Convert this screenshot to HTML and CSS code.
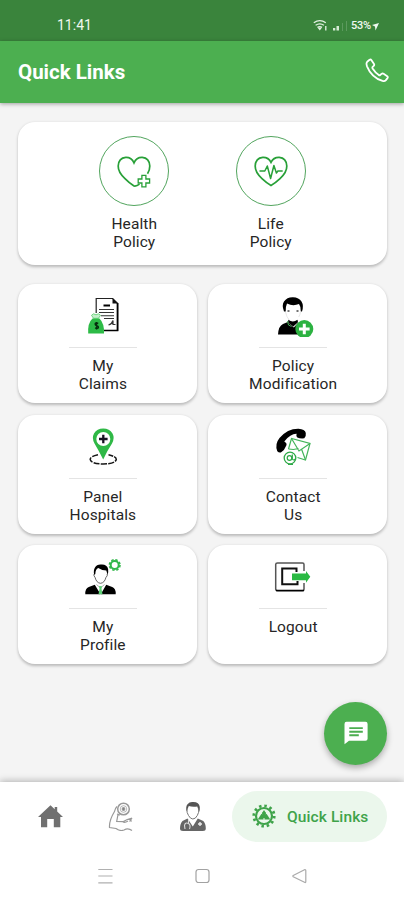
FILE: index.html
```html
<!DOCTYPE html>
<html lang="en">
<head>
<meta charset="utf-8">
<title>Quick Links</title>
<link rel="stylesheet" href="styles.css">
</head>
<body>
<div class="phone">
  <div class="status">
    <span class="time">11:41</span>
    <div class="status-right">
      <svg width="34" height="14" viewBox="311 20 34 14">
        <g fill="none" stroke="#e4f2e4" stroke-width="1.3"><path d="M311.8 23.8q6-4.300 12 0M313.600 26.300q4.200-2.900 8.300 0M315.500 28.400q2.200-1.500 4.500 0" /><path d="M323.800 27v4.500" /></g>
        <path d="M315.500 28.500h4.500l-2.200 3z" fill="#e4f2e4"/>
        <path d="M331 29h2.300v2.500H331zM334.500 27h2.500v4.500h-2.500z" fill="#d4ead4"/>
        <path d="M340 24h1v8h-1zM344 22h1v10h-1z" fill="#5c9a5e"/>
      </svg>
      <span class="battery">53%</span>
      <svg width="7" height="9" viewBox="0 0 7 9"><path d="M0 3 7 1 3.500 8.500 3 4.500z" fill="#eff8ef"/></svg>
    </div>
  </div>
  <header class="appbar">
    <h1>Quick Links</h1>
    <svg width="26" height="26" viewBox="0 0 26 26" fill="none" stroke="#fff" stroke-width="1.800" stroke-linejoin="round"><path d="M3.200 3.700 5.600 1.700Q6.700 1.100 7.500 2.200L10 5.900Q10.600 7 9.700 7.900L8.400 9.200Q8.200 9.800 8.600 10.500 11.200 14.600 14.800 17.100 15.600 17.500 16.200 17L17.500 15.900Q18.500 15.100 19.600 15.800L23.200 18.200Q24.200 19 23.500 20.100L21.700 22.400Q20.700 23.400 18.500 22.900 7.500 19.400 3 8.300 1.900 5.300 3.200 3.700Z"/></svg>
  </header>

  <main>
    <section class="card policies">
      <div class="policy">
        <div class="ring"><svg width="70" height="70" viewBox="0 0 70 70" fill="none" stroke="#28a038" stroke-width="1.700"><path d="M40.500 48.200Q37.500 50.500 35 50 30.500 47.300 26 42.700 19 36 19.200 30 19.600 22 26.800 21.400 32.500 21.200 35 26.800 37.500 21.200 43.200 21.400 50.400 22 50.800 30 50.800 34.500 48.500 37.800"/><path stroke-width="1.300" d="M42.900 39.300h4v3.700h3.700v4h-3.700v3.900h-4V47h-3.700v-4h3.700z"/></svg></div>
        <p>Health<br>Policy</p>
      </div>
      <div class="policy">
        <div class="ring"><svg width="70" height="70" viewBox="0 0 70 70" fill="none" stroke="#28a038" stroke-width="1.700"><path d="M35 49.500Q30.500 47 26 42.700 19 36 19.200 30 19.600 22 26.800 21.400 32.500 21.200 35 26.400 37.500 21.200 43.200 21.400 50.400 22 50.800 30 51 36 44 42.700 39.500 47 35 49.500Z"/><path stroke-width="1.500" stroke-linejoin="round" d="M23.500 35h5.300l2.500-5 3.300 12.500 3.300-13 2.500 7.500 1.500-2h4.800"/></svg></div>
        <p>Life<br>Policy</p>
      </div>
    </section>

    <section class="grid">
      <div class="card tile">
        <svg width="44" height="44" viewBox="81 293 44 44">
          <path d="M96.200 313V298.500h16.500l5 5V330.500H104" fill="none" stroke="#222" stroke-width="1.200"/><path d="M117.500 303v28.200M104 330.500h14" stroke="#000" stroke-width="1.700"/><path d="M112.500 298v5.500h5.500z" fill="#111"/>
          <path d="M103.500 305.500h6.500" stroke="#000" stroke-width="2"/><path d="M99 309.500h15M99 312.500h15M101 315.800h13M104 318.500h10" stroke="#333" stroke-width="1.100"/><path d="M108.500 325q3.500-1 4.500-4.500v4h2.500" fill="none" stroke="#333" stroke-width="1.200"/>
          <path d="m91.500 315.300 2-1.500 2.500 1 2.500-1 2 1.500-2 3h-5z" fill="#c5f0cc" stroke="#55ca68" stroke-width=".8"/><path d="M92.500 318.500h7q5 5 4.500 15H88.200Q87.500 323 92.500 318.500Z" fill="#2dbb47"/><path d="M98.300 323.400q-3-1.200-3.200.7 0 1.200 1.700 1.600 1.900.5 1.600 1.900-.7 1.500-3.300.2M96.600 322v7.500" fill="none" stroke="#062d0d" stroke-width="1.400"/>
        </svg>
        <hr><p>My<br>Claims</p>
      </div>
      <div class="card tile">
        <svg width="44" height="44" viewBox="271 293 44 44">
          <path d="M284 311.500q-2.500-6.500 0-10Q287 297 293 297.200q6 .2 8.500 4.300 2.500 4 .5 10h-1.200q.2-5-1.800-7.500-6 2.500-12-.5-1.500 3-1.300 8z"/>
          <path d="M287.500 311h2M296.500 311h2" stroke="#444" stroke-width="1.300"/><path d="M285.500 312q1 5 4 8.500M300.500 312q-.5 3-1.800 5" fill="none" stroke="#ddd" stroke-width=".7"/>
          <path d="M288.300 319.700q4.500 3.500 9.200 0l.5 2.500-4.700 4.300-5.200-4z"/><path d="M278 334.500q.5-8.500 5-10.500l4.800-2 6 5.500 4.200-4.500 2 11.500z"/><path d="m287.500 321 1 4 3 1.500" fill="none" stroke="#48b75a" stroke-width="1"/>
          <circle cx="304.300" cy="329" r="9" fill="#2cb241"/><path d="M304.300 323.700v10.600M299 329h10.600" stroke="#fff" stroke-width="3"/>
        </svg>
        <hr><p>Policy<br>Modification</p>
      </div>
      <div class="card tile">
        <svg width="44" height="44" viewBox="81 424 44 44">
          <path d="M98 454.800Q90 456.500 90.200 459.500 91.500 464 103.200 464 115 464 116.300 459.500 116.400 456.500 108.500 454.800" fill="none" stroke="#161616" stroke-width="1.500" stroke-dasharray="6 1.300"/>
          <path d="M103.200 459.500Q99 451 94.500 443.500 91.500 438 94 433.500 97 428.500 103.200 428.500 109.500 428.500 112.500 433.500 115 438 112 443.500 107 451 103.200 459.500Z" fill="#2fb846"/><circle cx="103.300" cy="439" r="7" fill="#fff"/><path d="M103.300 434.800v8.400M99 439h8.600" stroke="#151020" stroke-width="2.300"/>
        </svg>
        <hr><p>Panel<br>Hospitals</p>
      </div>
      <div class="card tile">
        <svg width="44" height="44" viewBox="271 424 44 44">
          <path d="M277.300 451.200q-2.800-7 2.200-13.200 8-9.500 19-9.300 6.500.3 7.300 4.300.5 3.500-1.500 5.300-4 .5-7-.8-1.500-1-.7-3.700-6-.2-12.300 7.600 3 1.700 2 4-1.500 4.500-5.500 7-2 .5-3.500-1.200z"/>
          <g fill="none" stroke="#43b45a" stroke-width="1.200"><path d="M288.500 449 291.500 438.500 310 443.500 305.500 460 297.500 457.500"/><path d="m291.500 438.500 7.500 12.500 11-7.500M288.500 449l5 .5 5-1M301.500 449l4 11"/></g>
          <circle cx="290" cy="458" r="5.800" fill="#fff" stroke="#2da947" stroke-width="1.300"/><circle cx="289.500" cy="458" r="2.300" fill="none" stroke="#2da947" stroke-width="1.200"/><path d="M292.300 454.500v4.500q1.500 2 3.200 0M288 464.500h5" fill="none" stroke="#2da947" stroke-width="1.200"/>
        </svg>
        <hr><p>Contact<br>Us</p>
      </div>
      <div class="card tile">
        <svg width="44" height="44" viewBox="81 554 44 44">
          <path d="M94.200 575q-1-5 .8-7.500 1.500-3 5.500-3 6.500-.7 7.600 4.500.5 3-.5 6l-1.300-4.500q-4 0-8-2.500-2.800 1-3 6z"/><path d="M94 574q-.5 2 1 3.300 1.500 5.700 5.500 6 4-.3 5.500-6 1.800-1.300 1.200-3.300" fill="none" stroke="#555" stroke-width=".9"/>
          <path d="M85.300 594.300q-.3-6 3.500-7.300l6-2.300 5.700 9.600zM115.700 594.300q.3-6-3.500-7.300l-6-2.300-5.400 9.600z"/><path d="m96.500 584.500 4 3.500 4-3.500" fill="none" stroke="#999" stroke-width=".8"/><path d="m99 586 3 .2-.5 2.500 1 5.500h-4l1-5.500z" fill="#5fd077"/>
          <circle cx="114.700" cy="565" r="4" fill="none" stroke="#31b74a" stroke-width="2"/><circle cx="114.700" cy="565" r="5.300" fill="none" stroke="#31b74a" stroke-width="1.600" stroke-dasharray="2.400 1.763"/>
        </svg>
        <hr><p>My<br>Profile</p>
      </div>
      <div class="card tile">
        <svg width="44" height="44" viewBox="271 554 44 44">
          <path d="M304 571v-6.500q0-1.500-1.500-1.500h-25q-1.800 0-1.800 1.500v24.500q0 1.700 1.800 1.700h25q1.500 0 1.500-1.500V583" fill="none" stroke="#555" stroke-width="1.500"/><path d="M276 590.500h28" stroke="#000" stroke-width="1.500"/>
          <path d="M296.500 572v-3.500h-14.300v15.700h15.300V581" fill="none" stroke="#111" stroke-width="2"/>
          <path d="M292 573.500h14v-2.500l4.300 5.700-4.300 6v-2.500h-14z" fill="#2aba43"/>
        </svg>
        <hr><p>Logout</p>
      </div>
    </section>
    <button class="fab" aria-label="Chat"><svg width="24" height="24" viewBox="0 0 24 24"><path d="M2.500.8h19Q23.600.8 23.600 2.900V17.700Q23.600 19.800 21.500 19.800H5L.5 23.300V2.900Q.5.800 2.500.8Z" fill="#fff"/><path d="M5.300 7.100h13.500M5.300 10.700h13.500M5.300 14.200h9.500" stroke="#4cae50" stroke-width="1.900"/></svg></button>
  </main>

  <nav class="tabs">
    <svg width="26" height="30" viewBox="37 801 26 30"><path d="m38 817 12.500-11.700 4.200 4V807h2.500v4.500L63 817h-2.700v10.300h-6.500V819h-6.600v8.300h-6.200V817z" fill="#707070"/></svg>
    <svg width="26" height="30" viewBox="108 801 26 30" fill="none" stroke="#999" stroke-width="1.200"><circle cx="123.500" cy="809" r="5.800" stroke-width="1.500"/><circle cx="123.500" cy="809" r="3.300" stroke-width=".7"/><circle cx="123.500" cy="809" r="1.300" fill="#777"/><path d="M117 806.500q-2 2-2.500 5-5.500 9-5 16l6.500 1q4 3 8 1.500 4-2.500 8 .5M118 814.500l-1.300 7 6.300.2q4-2.500 9-3.500M132 818l-2 3h2M128 821q-3 2-5 1M117 814l3 1"/></svg>
    <svg width="28" height="30" viewBox="178.500 801 28 30"><path d="M186 811.500q-1-5 1-7.200 2-2.500 5-2.300 6.500-.4 7.300 5 .2 2.500-.8 5l-1.700-5.500q-5 .8-8.500-.5z" fill="#555"/><path d="M186.500 808q-.5 5 1.500 7.500 2 3.500 4.300 3.500 2.700 0 4.500-3.500 1.700-2.500 1.700-7.500" fill="none" stroke="#777" stroke-width="1"/><path d="m187 818.500 5.300 8 5-8 5.500 2.500q2.500 2.500 2.500 7.500 0 2.500-3 2.500h-19.800q-3 0-3-2.500 0-5 2.500-7.500z" fill="#666"/><path d="M188 819.500v4q-3.500-1.500-4 2l.5 3.500M188 823.500q2.500 1.500 1 5.500" fill="none" stroke="#ddd" stroke-width="1.100"/><path d="M199.500 822v4M197.500 824h4" stroke="#eee" stroke-width="1.400"/></svg>
    <div class="pill">
      <svg width="24" height="24" viewBox="-12 -12 24 24"><circle r="8" fill="none" stroke="#3fa34a" stroke-width="2.200"/><circle r="10.200" fill="none" stroke="#3fa34a" stroke-width="2.800" stroke-dasharray="2.500 2.841"/><path d="M-6.300 3.500 0-6 6.300 3.500z" fill="#3fa34a"/><path d="M0 2v5M-3.500-3.500l2.500 2M3.500-3.500l-2.500 2" stroke="#e9f7ea" stroke-width="1"/><circle cy="-2" r="2" fill="#3fa34a"/></svg>
      <span>Quick Links</span>
    </div>
  </nav>
  <div class="system">
    <svg width="15" height="16" viewBox="0 0 15 16" stroke="#b0b0b0" stroke-width="1.200"><path d="M.3 1.500h14.200M.3 8h14.200M.3 14.800h14.200"/></svg>
    <svg width="15" height="16" viewBox="0 0 15 16" fill="none" stroke="#a2a2a2" stroke-width="1.200"><rect x="1" y="1.500" width="13" height="13" rx="2.500"/></svg>
    <svg width="15" height="16" viewBox="0 0 15 16" fill="none" stroke="#aaa" stroke-width="1.200" stroke-linejoin="round"><path d="M13 1.500Q13.800 1.500 13.800 2.500V13.500Q13.800 14.700 13 14.500L1.200 8.700Q.6 8.200 1.200 7.500Z"/></svg>
  </div>
</div>
</body>
</html>
```
FILE: styles.css
```css
* { box-sizing: border-box; }
body { margin: 0; font-family: Roboto, "Liberation Sans", sans-serif; background: #f4f4f4; }
svg { display: block; flex: none; }
p, h1 { margin: 0; }
.phone { width: 404px; height: 900px; display: flex; flex-direction: column; overflow: hidden; }
.status { height: 41px; flex: none; background: #3a843c; color: #eff8ef; display: flex; align-items: flex-start; justify-content: space-between; padding: 17px 25px 0 57px; }
.time { font-size: 14px; line-height: 17px; }
.status-right { display: flex; align-items: center; padding-top: 2px; }
.battery { font-size: 11px; line-height: 14px; font-weight: 500; margin: 0 1px 0 4px; letter-spacing: -.2px; }
.appbar { position: relative; height: 62px; flex: none; background: #4caf50; display: flex; align-items: center; justify-content: space-between; padding: 0 14px 0 18px; box-shadow: 0 1px 4px rgba(0,0,0,.35); }
.appbar h1 { font-size: 20.500px; line-height: 24px; font-weight: 700; color: #fff; }
.appbar svg { margin-top: -3px; }
main { position: relative; flex: 1; padding: 19px 17px 0 18px; }
.card { background: #fff; border-radius: 17px; box-shadow: 0 1.500px 3px rgba(0,0,0,.24); }
.card p { font-size: 15.500px; line-height: 18px; letter-spacing: .1px; text-align: center; color: #262626; }
.policies { height: 143px; display: flex; justify-content: center; gap: 66.500px; padding: 14px 0 0; }
.policy { width: 70px; }
.ring { width: 70px; height: 70px; border: 1px solid #52a55e; border-radius: 50%; margin-bottom: 9px; }
.ring svg { margin: -1px; }
.grid { display: grid; grid-template-columns: 1fr 1fr; grid-auto-rows: 119px; gap: 11.500px; margin-top: 19px; }
.tile { display: flex; flex-direction: column; align-items: center; padding: 9px 9px 0 0; }
.tile hr { width: 68px; height: 1px; border: 0; background: #e4e4e4; margin: 10px 0 9px; }
.fab { position: absolute; right: 17px; bottom: 17.500px; width: 63px; height: 63px; border: 0; padding: 0; border-radius: 50%; background: #4caf50; box-shadow: 0 3px 6px rgba(0,0,0,.3); display: grid; place-items: center; }
.tabs { position: relative; height: 68px; flex: none; background: #fff; display: flex; align-items: center; padding: 0 17px 0 37px; box-shadow: 0 -1px 7px rgba(0,0,0,.28); }
.tabs > svg + svg { margin-left: 45px; }
.tabs > svg + svg + svg { margin-left: 44.500px; }
.pill { width: 155px; height: 51px; border-radius: 26px; background: #ebf7ec; margin-left: auto; display: flex; align-items: center; padding-left: 20px; gap: 11px; }
.pill span { font-size: 15.500px; font-weight: 500; line-height: 20px; color: #3fa34a; letter-spacing: .1px; margin-top: 1px; }
.system { position: relative; height: 50px; flex: none; background: #fff; display: flex; justify-content: space-between; align-items: center; padding: 2px 97px 0 98px; }
```
